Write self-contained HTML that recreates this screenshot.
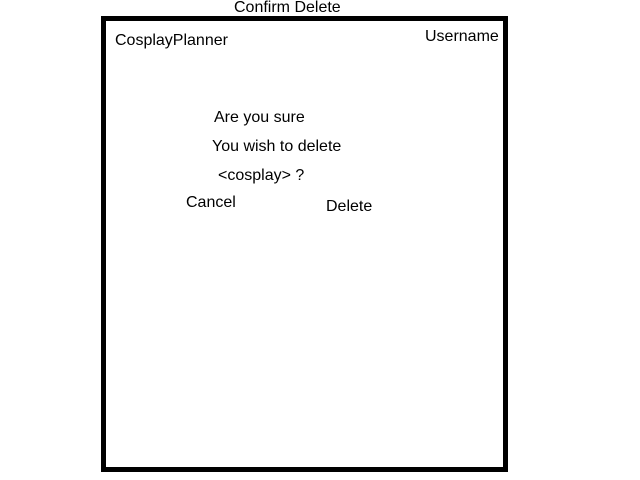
<!DOCTYPE html>
<html><head><style>
body{margin:0;width:640px;height:480px;background:#fff;font-family:"Liberation Sans",Arial,sans-serif;font-size:16px;color:#000;position:relative;overflow:hidden}
.box{position:absolute;left:101px;top:16px;width:397px;height:446px;border:5px solid #000}
.t{position:absolute;white-space:nowrap}
</style></head><body>
<div class="t" style="left:234px;top:-1px;font-size:16px">Confirm Delete</div>
<div class="box"></div>
<div class="t" style="left:115px;top:32px">CosplayPlanner</div>
<div class="t" style="left:425px;top:28px">Username</div>
<div class="t" style="left:214px;top:109px">Are you sure</div>
<div class="t" style="left:212px;top:138px">You wish to delete</div>
<div class="t" style="left:218px;top:167px">&lt;cosplay&gt; ?</div>
<div class="t" style="left:186px;top:194px">Cancel</div>
<div class="t" style="left:326px;top:198px">Delete</div>
</body></html>
